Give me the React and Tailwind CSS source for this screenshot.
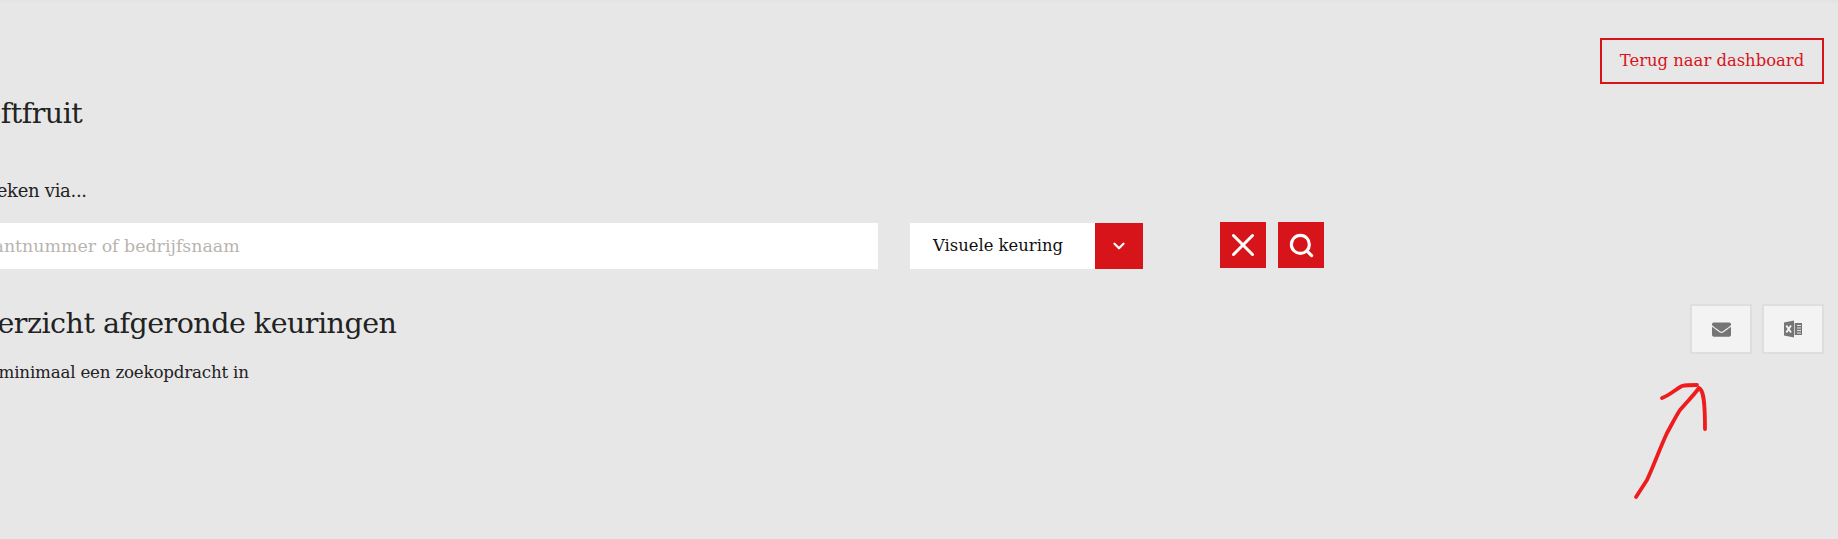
import { FaEnvelope } from 'react-icons/fa';
import { LuChevronDown, LuSearch, LuX } from 'react-icons/lu';

function IconButton({ children }) {
  return (
    <button className="w-[62px] h-[50px] flex items-center justify-center bg-[#f3f3f3] border-2 border-[#dedede] text-[#757575]">
      {children}
    </button>
  );
}

function RedSquare({ children }) {
  return (
    <button className="w-[46px] h-[46px] flex items-center justify-center bg-[#d7141a] text-white">
      {children}
    </button>
  );
}

function ExcelIcon() {
  return (
    <svg width="18" height="18" viewBox="0 0 18 18">
      <path d="M0 2.5 L10 .5 V17.5 L0 15.5 Z" fill="#757575" />
      <path d="M2.3 5.5 L7 12.5 M7 5.5 L2.3 12.5" stroke="#f3f3f3" strokeWidth="1.9" fill="none" />
      <path d="M10.7 3 H18 V15 H10.7 Z" fill="#757575" />
      <path d="M13 5.5 H17 M13 8 H17 M13 10.5 H17 M13 13 H17" stroke="#f3f3f3" strokeWidth=".9" fill="none" />
    </svg>
  );
}

export default function App() {
  return (
    <div className="relative w-full h-[539px] overflow-hidden bg-[#e7e7e7] shadow-[inset_0_3px_3px_-1px_rgba(0,0,0,0.02)] font-['DejaVu_Serif',serif] text-[#222]">
      <div className="flex justify-end pt-[38px] pr-[14px]">
        <a className="h-[46px] w-[224px] flex items-center justify-center border-2 border-[#d7141a] text-[#d7141a] text-[16.4px]">
          Terug naar dashboard
        </a>
      </div>

      <h1 className="mt-[12px] ml-[-35px] text-[28.5px] leading-[36px] font-normal tracking-[-0.5px]">Softfruit</h1>

      <p className="mt-[45px] ml-[-26px] text-[18px] leading-[28px] tracking-[-0.3px]">Zoeken via...</p>

      <div className="flex items-start mt-[17px] ml-[-40px]">
        <input
          placeholder="Klantnummer of bedrijfsnaam"
          className="mt-[1px] w-[918px] h-[46px] bg-white pl-[15px] text-[17.4px] outline-none placeholder:text-[#b8b4b0]"
        />
        <div className="mt-[1px] ml-[32px] flex h-[46px] w-[233px]">
          <div className="flex-1 flex items-center pl-[23px] bg-white text-[16.4px] text-[#111]">Visuele keuring</div>
          <div className="w-[48px] flex items-center justify-center bg-[#d7141a] text-white">
            <LuChevronDown size={18} strokeWidth={3} />
          </div>
        </div>
        <div className="ml-[77px] flex gap-[12px]">
          <RedSquare><LuX size={38} strokeWidth={1.9} /></RedSquare>
          <RedSquare><LuSearch size={27} strokeWidth={2.8} /></RedSquare>
        </div>
      </div>

      <div className="flex justify-between items-start mt-[35px] pr-[14px] ml-[-41px]">
        <h2 className="mt-[2px] text-[28.5px] leading-[36px] font-normal tracking-[-0.5px]">Overzicht afgeronde keuringen</h2>
        <div className="flex gap-[10px]">
          <IconButton><FaEnvelope size={19} /></IconButton>
          <IconButton><ExcelIcon /></IconButton>
        </div>
      </div>

      <p className="mt-[6px] ml-[-33px] text-[16.7px] leading-[24px] tracking-[-0.2px]">Vul minimaal een zoekopdracht in</p>

      <svg className="absolute left-[1620px] top-[370px]" width="110" height="140" viewBox="0 0 110 140" fill="none" stroke="#ee1c1c" strokeWidth="3.8" strokeLinecap="round" strokeLinejoin="round">
        <path d="M16 127 L27 110 C34 95 40 78 47 63 C52 54 56 46 60 40 C66 33 73 26 79 18 C83 20 85 28 85 59" />
        <path d="M42 28 C50 25 56 19 62 16 C66 15 72 15 77 15" />
      </svg>
    </div>
  );
}
